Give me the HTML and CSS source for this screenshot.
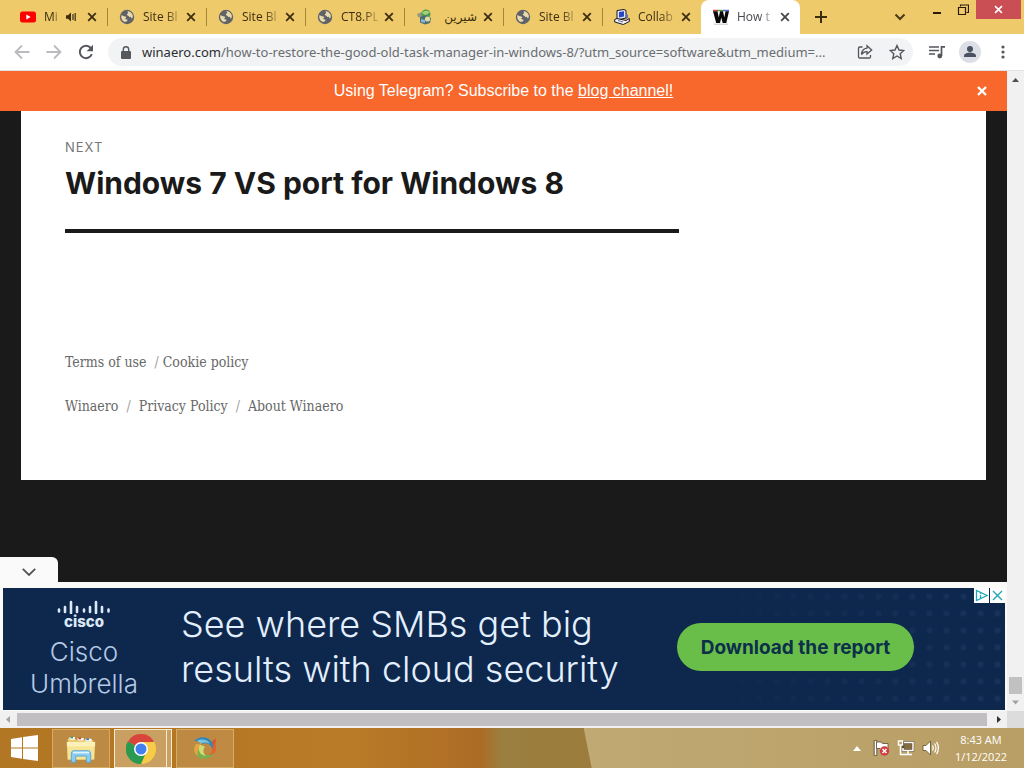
FILE: index.html
```html
<!DOCTYPE html>
<html lang="en">
<head>
<meta charset="utf-8">
<meta name="viewport" content="width=device-width, initial-scale=1.0">
<title>How to restore the good old Task Manager in Windows 8</title>
<link rel="stylesheet" href="styles.css">
</head>
<body>

<!-- shared icons -->
<svg class="sprite" aria-hidden="true">
  <symbol id="i-x" viewBox="0 0 10 10"><path d="M1.2 1.2l7.6 7.6M8.8 1.2L1.2 8.8" fill="none" stroke="currentColor" stroke-width="1.8"/></symbol>
  <symbol id="i-globe" viewBox="0 0 16 16"><circle cx="8" cy="8" r="7.2" fill="#5f6368"/><path d="M2.2 6.2c1.6.2 2.6 1.200 4 1.200 1.300 0 1.200 1.200.4 1.700-.7.5 0 1.600 1.200 1.500.9 0 1 .7.300 1.300-.7.700-2.100 1.100-3 .9-1.900-1.200-3.200-3.600-2.900-6.600zM8.600 2c2.200.2 4.200 1.700 5.100 4 .3 1.300.1 2.400-.4 3.300-.7.4-1-.4-1.300-1.100-.5-.8-1.700-.2-2.500-1.100-.6-.8-1.700-.6-1.600-1.600.1-.9 1.300-.8 1.300-1.700 0-.6-.8-.9-.6-1.800z" fill="#e9d9ad"/></symbol>
</svg>

<header class="tabs">
  <div class="tab">
    <svg class="fav" viewBox="0 0 16 16"><rect y="2.500" width="16" height="11" rx="2.500" fill="#f00"/><path d="M6.300 5.500v5l4.400-2.500z" fill="#fff"/></svg>
    <span class="tab-title">Mi</span>
    <svg class="sound" viewBox="0 0 12 12"><path d="M1 4.200h2L6 1.500v9L3 7.800H1z" fill="#3b2d10"/><path d="M8 3v6M10.200 2v8" stroke="#3b2d10" stroke-width="1.200"/></svg>
    <button class="tab-x" aria-label="Close tab"><svg><use href="#i-x"/></svg></button>
  </div>
  <div class="tab">
    <svg class="fav"><use href="#i-globe"/></svg>
    <span class="tab-title">Site Bl</span>
    <button class="tab-x" aria-label="Close tab"><svg><use href="#i-x"/></svg></button>
  </div>
  <div class="tab">
    <svg class="fav"><use href="#i-globe"/></svg>
    <span class="tab-title">Site Bl</span>
    <button class="tab-x" aria-label="Close tab"><svg><use href="#i-x"/></svg></button>
  </div>
  <div class="tab">
    <svg class="fav"><use href="#i-globe"/></svg>
    <span class="tab-title">CT8.PL</span>
    <button class="tab-x" aria-label="Close tab"><svg><use href="#i-x"/></svg></button>
  </div>
  <div class="tab">
    <svg class="fav" viewBox="0 0 16 16"><path d="M1 5l5-2 2 3-2 3-4-1z" fill="#8f9a83"/><circle cx="10" cy="5" r="4.500" fill="#4e9a45"/><path d="M6 4c2-3 6-3 8-.500-2 .500-3 2.500-5 2.500z" fill="#a2d27b"/><path d="M4 8l6-2 5 3-1 5-5 1.500-5-2z" fill="#4d6b73"/><circle cx="11.500" cy="10" r="2.600" fill="#d8dfa0"/><path d="M5 10l4 1v3l-4-1z" fill="#7fb7d8"/></svg>
    <span class="tab-title rtl" lang="fa" dir="rtl">شیرین</span>
    <button class="tab-x" aria-label="Close tab"><svg><use href="#i-x"/></svg></button>
  </div>
  <div class="tab">
    <svg class="fav"><use href="#i-globe"/></svg>
    <span class="tab-title">Site Bl</span>
    <button class="tab-x" aria-label="Close tab"><svg><use href="#i-x"/></svg></button>
  </div>
  <div class="tab">
    <svg class="fav" viewBox="0 0 16 16"><path d="M3 1.500L10 .5l2 1v7.500l-7 1.500-2-1z" fill="#e8eaf2" stroke="#15152c"/><path d="M5 3l5-.7v5.200L5 8.500z" fill="#2847c8"/><path d="M.7 10.500L3 9.500l9 2 3.300-2v3l-6 3-8.600-2.500z" fill="#f3f3f3" stroke="#15152c"/><path d="M4 11.500l5 1.500" stroke="#666b88"/><path d="M12 4l2 2v3l-2 1z" fill="#6572a8"/></svg>
    <span class="tab-title">Collab</span>
    <button class="tab-x" aria-label="Close tab"><svg><use href="#i-x"/></svg></button>
  </div>
  <div class="tab active">
    <svg class="fav" viewBox="0 0 16 16"><path d="M0 .8h5v1.500H0z" fill="#cf3c3c"/><path d="M5 .8h5v1.500H5z" fill="#47a540"/><path d="M10 .8h6v1.500h-6z" fill="#5360d0"/><path d="M0 2.300h4.500l1.300 6.200L7 2.300h3l1.300 6.200 1.200-6.200H16L13.300 14H9.700L8.300 8.500 7 14H3.200z" fill="#080808"/><path d="M1 15.200h14" stroke="#c5c5c5"/></svg>
    <span class="tab-title">How t</span>
    <button class="tab-x" aria-label="Close tab"><svg><use href="#i-x"/></svg></button>
  </div>
  <button class="new-tab" aria-label="New tab"><svg viewBox="0 0 12 12"><path d="M6 0v12M0 6h12" stroke="#3b2d10" stroke-width="2"/></svg></button>
  <button class="tab-search" aria-label="Search tabs"><svg viewBox="0 0 12 8"><path d="M1.500 1.500L6 6l4.500-4.500" fill="none" stroke="#4a3a17" stroke-width="2"/></svg></button>
  <div class="win-controls">
    <button aria-label="Minimize"><svg viewBox="0 0 12 12"><path d="M2 9h8" stroke="#2b1a0a" stroke-width="2"/></svg></button>
    <button aria-label="Restore"><svg viewBox="0 0 12 12"><path d="M3.500 2.500V1h8v7.500H9.500M1.500 3.500h7v7h-7z" fill="none" stroke="#2b1a0a" stroke-width="1.200"/></svg></button>
    <button class="win-close" aria-label="Close"><svg><use href="#i-x"/></svg></button>
  </div>
</header>

<nav class="toolbar">
  <button class="nav-btn off" aria-label="Back"><svg viewBox="0 0 16 16"><path d="M15.500 8H2M8 1.500L1.500 8 8 14.500" fill="none" stroke="currentColor" stroke-width="1.800"/></svg></button>
  <button class="nav-btn off" aria-label="Forward"><svg viewBox="0 0 16 16"><path d="M.5 8H14M8 1.500L14.500 8 8 14.500" fill="none" stroke="currentColor" stroke-width="1.800"/></svg></button>
  <button class="nav-btn" aria-label="Reload"><svg viewBox="0 0 16 16"><path d="M13.800 10.200A6.200 6.200 0 1 1 12.800 4" fill="none" stroke="currentColor" stroke-width="2"/><path d="M15 .8v6.400H8.600z" fill="currentColor"/></svg></button>
  <div class="address">
    <svg class="lock" viewBox="0 0 10 13"><rect y="5" width="10" height="8" rx="1" fill="#55585d"/><path d="M2.300 5.500V3.500a2.700 2.700 0 0 1 5.400 0v2" fill="none" stroke="#55585d" stroke-width="1.400"/></svg>
    <a class="url" href="#"><b>winaero.com</b>/how-to-restore-the-good-old-task-manager-in-windows-8/?utm_source=software&amp;utm_medium=...</a>
    <button class="ico" aria-label="Share"><svg viewBox="0 0 16 16" fill="none" stroke="currentColor" stroke-width="1.300"><path d="M5.500 3H2.800A1.300 1.300 0 0 0 1.500 4.300v8.400A1.300 1.300 0 0 0 2.800 14h9.400a1.300 1.300 0 0 0 1.300-1.300V11"/><path d="M10 1.800L14.700 6 10 10V7.600C7.400 7.500 5.700 8.600 4.500 10.600 4.700 7 6.600 4.500 10 4.200z"/></svg></button>
    <button class="ico" aria-label="Bookmark"><svg viewBox="0 0 16 16"><path d="M8 1.500l2 4.500 4.800.5-3.600 3.200 1 4.800L8 12l-4.200 2.500 1-4.800L1.200 6.500 6 6z" fill="none" stroke="currentColor" stroke-width="1.400"/></svg></button>
  </div>
  <div class="actions">
    <button class="ico" aria-label="Media"><svg viewBox="0 0 16 16"><path d="M0 3h10M0 6.500h10M0 10h6" stroke="currentColor" stroke-width="1.500"/><path d="M12.500 12V2.800H16" fill="none" stroke="currentColor" stroke-width="1.700"/><circle cx="10.800" cy="12" r="2.400" fill="currentColor"/></svg></button>
    <button class="profile" aria-label="Profile"><svg viewBox="0 0 22 22"><circle cx="11" cy="11" r="11" fill="#dcdfe6"/><circle cx="11" cy="8" r="3" fill="#4a5163"/><path d="M5 16v-1.500c0-2 4-3 6-3s6 1 6 3V16z" fill="#4a5163"/></svg></button>
    <button class="ico" aria-label="Menu"><svg viewBox="0 0 16 16" fill="currentColor"><circle cx="8" cy="3" r="1.600"/><circle cx="8" cy="8" r="1.600"/><circle cx="8" cy="13" r="1.600"/></svg></button>
  </div>
</nav>

<div class="viewport">
  <main class="page">
    <div class="notice">
      <p>Using Telegram? Subscribe to the <a href="#">blog channel!</a></p>
      <button aria-label="Dismiss"><svg viewBox="0 0 10 10"><path d="M1 1l8 8M9 1L1 9" stroke="#fff" stroke-width="2.400"/></svg></button>
    </div>

    <div class="site">
      <div class="next-post">
        <span class="meta">NEXT</span>
        <a href="#">Windows 7 VS port for Windows 8</a>
      </div>
      <footer class="site-footer">
        <p><a href="#">Terms of use</a>&nbsp; <i>/</i> <a href="#">Cookie policy</a></p>
        <p><a href="#">Winaero</a>&nbsp; <i>/</i>&nbsp; <a href="#">Privacy Policy</a>&nbsp; <i>/</i>&nbsp; <a href="#">About Winaero</a></p>
      </footer>
    </div>

    <aside class="anchor-ad">
      <button class="collapse" aria-label="Collapse ad"><svg viewBox="0 0 14 8"><path d="M.8.800L7 7 13.200.8" fill="none" stroke="#555" stroke-width="1.800"/></svg></button>
      <div class="ad">
        <div class="brand">
          <svg viewBox="0 0 54 14"><path d="M2 9.500v2M8 7v5M14 2v11M20 7v5M27 9.500v2M33 7v5M39 2v11M45 7v5M51.500 9.500v2" stroke="#dbe8f8" stroke-width="2.600" stroke-linecap="round"/></svg>
          <b>cisco</b>
          <span>Cisco<br>Umbrella</span>
        </div>
        <p class="slogan">See where SMBs get big<br>results with cloud security</p>
        <button class="cta">Download the report</button>
        <div class="ad-choices">
          <button aria-label="AdChoices"><svg viewBox="0 0 15 15"><path d="M2.500 2.500v10l10.500-5z" fill="none" stroke="#1fa7b4" stroke-width="1.300"/><path d="M6.500 5v1M6.500 7v3" stroke="#1fa7b4" stroke-width="1.300"/></svg></button>
          <button aria-label="Close ad"><svg viewBox="0 0 15 15"><path d="M3 3l9 9M12 3l-9 9" stroke="#1fa7b4" stroke-width="1.400"/></svg></button>
        </div>
      </div>
    </aside>
  </main>

  <div class="vscroll">
    <svg viewBox="0 0 17 17"><path d="M5 11l3.500-4 3.500 4z" fill="#505050"/></svg>
    <div class="vthumb"></div>
    <svg viewBox="0 0 17 17"><path d="M5 6.500l3.500 4 3.500-4z" fill="#a3a3a3"/></svg>
  </div>
  <div class="hscroll">
    <svg viewBox="0 0 17 17"><path d="M10 5L6 8.500 10 12z" fill="#a3a3a3"/></svg>
    <div class="hthumb"></div>
    <svg viewBox="0 0 17 17"><path d="M7 5l4 3.500L7 12z" fill="#303030"/></svg>
  </div>
  <div class="corner"></div>
</div>

<footer class="taskbar">
  <button class="start" aria-label="Start"><svg viewBox="0 0 27 26"><path d="M0 4l11-1.800v10.300H0zM12 2l15-2v12.500H12zM0 13.500h11v10.300L0 22zM12 13.500h15V26l-15-2z" fill="#fff"/></svg></button>
  <button class="task" aria-label="File Explorer"><svg viewBox="0 0 34 32">
    <path d="M2 4h8l2 2h19v22H2z" fill="#e9c96c"/><path d="M4 4h6M13 5h7M22 6h7" stroke="#fff" stroke-width="3"/><path d="M5 3h3" stroke="#3f9a5a" stroke-width="2"/><path d="M14 4h3" stroke="#c23e30" stroke-width="2"/><path d="M23 5h3" stroke="#2c78c4" stroke-width="2"/>
    <path d="M1 8h32l-1 20H2z" fill="#f7e596"/><path d="M1 8h32v5H1z" fill="#fbf0b8"/><path d="M6 31v-9c0-3 1-4 3-4h16c2 0 3 1 3 4v9h-5v-7H11v7z" fill="#8bcdf0" stroke="#4da2d8"/><path d="M8 20h18" stroke="#e0f6ff" stroke-width="2"/>
  </svg></button>
  <button class="task current" aria-label="Google Chrome"><svg viewBox="0 0 30 30">
    <path d="M15 15L2 7.500A15 15 0 0 1 28 7.500z" fill="#d9453a"/><path d="M15 15L28 7.500A15 15 0 0 1 15 30z" fill="#f7cb45"/><path d="M15 15v15A15 15 0 0 1 2 7.500z" fill="#2a9a50"/><path d="M15 8h13.300c3 7-1 19-13.300 22l6.500-11z" fill="#f7cb45"/><path d="M2 7.500L8.500 19l6.500 3 4-1L15 30A15 15 0 0 1 2 7.500z" fill="#2a9a50"/><circle cx="15" cy="15" r="7" fill="#fff"/><circle cx="15" cy="15" r="5.500" fill="#4180ee"/>
  </svg></button>
  <button class="task" aria-label="Swirl"><svg viewBox="0 0 30 30">
    <path d="M24 5c5 5 5 12 1 16-3 3-7 4-11 2 6 0 10-4 9-9 0-3-2-5-4-6l5 1z" fill="#e2642c"/>
    <path d="M27 2c1 4 0 6-1 9l-4-4c2-1 4-2 5-5z" fill="#d9532b"/>
    <path d="M4 9c-4 6-2 13 4 16 6 3 13 1 19-5-5 2-9 3-12 1-5-2-6-6-4-11z" fill="#7aae50"/>
    <path d="M5 9c-4 5-3 11 2 14-1-4-1-9 4-13z" fill="#f0a03c"/>
    <path d="M9 10c-3 6 0 12 7 13-3-3-4-7-1-11z" fill="#cfdc72"/>
    <path d="M2 6C7 1 15 0 20 4c4 3 5 7 4 11-2-5-7-8-12-6-2-3-6-4-10-3z" fill="#2f86bd"/>
    <path d="M6 5c6-2 12-1 15 4-4-2-8-2-11 0z" fill="#79c6dc"/>
  </svg></button>
  <div class="tray">
    <svg class="up" viewBox="0 0 8 5"><path d="M0 5l4-5 4 5z" fill="#fff"/></svg>
    <svg viewBox="0 0 18 18"><path d="M2.500 1.500v15" stroke="#4a3a24" stroke-width="3.500"/><path d="M2.500 2v14" stroke="#fff" stroke-width="1.800"/><path d="M3.500 3h5l1 1.500H15V11H8L7 9.500H3.500z" fill="#fff" stroke="#5d4a30" stroke-width=".8"/><circle cx="11.500" cy="12" r="4.700" fill="#cf3e43"/><path d="M9.500 10l4 4M13.500 10l-4 4" stroke="#fff" stroke-width="1.500"/></svg>
    <svg viewBox="0 0 18 18"><path d="M6 3.500h10v8H6z" fill="#806b43" stroke="#5d4a30" stroke-width="2.400"/><path d="M7 3.500h9v8H6V9M11 12v3M7 15.500h8" fill="none" stroke="#fff" stroke-width="1.500"/><path d="M1.500 2h4v4h-4zM3.500 6v9.500H7" fill="none" stroke="#fff" stroke-width="1.500"/></svg>
    <svg viewBox="0 0 18 18"><path d="M2 6.500h3L9.500 2v14L5 11.500H2z" fill="#fff" stroke="#5d4a30" stroke-width=".8"/><path d="M11.500 6.500c1 1.500 1 3.500 0 5M13.500 4.500c2 2.500 2 6.500 0 9M15.500 2.800c2.500 3.500 2.500 9 0 12.400" fill="none" stroke="#fff" stroke-width="1.200"/></svg>
    <time>8:43 AM<br>1/12/2022</time>
  </div>
</footer>

</body>
</html>
```

FILE: styles.css
```css
* { box-sizing: border-box; }
body {
  margin: 0;
  min-height: 100vh;
  display: flex;
  flex-direction: column;
  font-family: "Open Sans", "Noto Sans", sans-serif;
  font-size: 12px;
  background: #fff;
}
button { border: 0; padding: 0; margin: 0; background: none; color: inherit; font: inherit; cursor: pointer; }
svg { display: block; flex: none; }
p { margin: 0; }
.sprite { position: absolute; width: 0; height: 0; }

/* tab strip */
.tabs {
  display: flex;
  height: 34px;
  padding-left: 8px;
  background: #efca6b;
  color: #3b2d10;
}
.tab {
  display: flex;
  align-items: center;
  flex: 0 1 99px;
  min-width: 0;
  padding: 0 7px 0 12px;
}
.tab + .tab { background: linear-gradient(#a98536, #a98536) left center / 1px 18px no-repeat; }
.tabs .tab.active { background: #fff; border-radius: 8px 8px 0 0; color: #45484d; }
.fav { width: 16px; height: 16px; margin-right: 8px; }
.tab-title {
  flex: 1;
  min-width: 0;
  white-space: nowrap;
  line-height: 18px;
  -webkit-mask-image: linear-gradient(to right, #000 60%, #0003);
  mask-image: linear-gradient(to right, #000 60%, #0003);
}
.tab-title.rtl { font-family: "Open Sans", "DejaVu Sans", sans-serif; -webkit-mask-image: none; mask-image: none; }
.sound { width: 12px; height: 12px; margin: 0 4px 0 6px; }
.tab-x { padding: 3px; margin-left: 3px; }
.tab-x svg { width: 10px; height: 10px; }
.new-tab { width: 42px; display: grid; place-items: center; }
.new-tab svg { width: 12px; height: 12px; }
.tab-search { margin-left: auto; width: 32px; display: grid; place-items: center; }
.tab-search svg { width: 12px; height: 8px; }
.win-controls { display: flex; align-items: flex-start; margin-left: 8px; }
.win-controls button { width: 26px; height: 19px; display: grid; place-items: center; }
.win-controls svg { width: 12px; height: 12px; }
.win-controls .win-close { width: 45px; margin-right: 3px; background: #c94f54; color: #fff; }
.win-close svg { width: 9px; height: 9px; }

/* toolbar */
.toolbar {
  display: flex;
  align-items: center;
  height: 37px;
  padding: 0 13px 0 14px;
  border-bottom: 1px solid #e3e3e3;
  background: #fff;
  color: #54575c;
}
.nav-btn { width: 16px; margin-right: 16px; }
.nav-btn svg { width: 16px; height: 16px; }
.nav-btn.off { color: #b9bbbe; }
.address {
  flex: 1;
  min-width: 0;
  display: flex;
  align-items: center;
  gap: 16px;
  height: 28px;
  margin-left: -2px;
  padding: 0 8px 0 13px;
  border-radius: 14px;
  background: #f1f3f4;
}
.lock { width: 10px; height: 13px; }
.url {
  flex: 1;
  min-width: 0;
  margin-left: -5px;
  white-space: nowrap;
  font-family: "Noto Sans", "Open Sans", sans-serif;
  font-size: 13px;
  line-height: 20px;
  color: #6a6d72;
  text-decoration: none;
}
.url b { font-weight: 400; color: #2c2e31; }
.ico svg { width: 16px; height: 16px; }
.actions { display: flex; align-items: center; gap: 14px; margin-left: 16px; }
.profile svg { width: 22px; height: 22px; }

/* page viewport */
.viewport {
  flex: 1;
  display: grid;
  grid-template: 1fr 17px / 1fr 17px;
}
.page {
  display: flex;
  flex-direction: column;
  min-width: 0;
  background: #1a1a1a;
}
.notice {
  display: flex;
  align-items: center;
  height: 40px;
  padding: 0 20px 0 30px;
  background: #f8672b;
  color: #fff;
  font: 16px/24px "Liberation Sans", Arial, sans-serif;
}
.notice p { flex: 1; text-align: center; }
.notice a { color: #fff; }
.notice svg { width: 10px; height: 10px; }
.site {
  margin: 0 21px auto;
  padding: 24px 44px 62px;
  background: #fff;
}
.next-post {
  max-width: 614px;
  padding-bottom: 26px;
  border-bottom: 4px solid #1a1a1a;
  font-family: Inter, sans-serif;
}
.meta { display: block; font-size: 13px; line-height: 24px; letter-spacing: 1px; color: #777; }
.next-post a {
  display: block;
  padding-top: 4px;
  font-size: 30px;
  line-height: 40px;
  font-weight: 700;
  color: #1a1a1a;
  text-decoration: none;
}
.site-footer {
  padding-top: 117px;
  font: 14px/24px "DejaVu Serif Condensed", "DejaVu Serif", serif;
  font-stretch: condensed;
  color: #686868;
}
.site-footer p + p { margin-top: 20px; }
.site-footer a { color: #686868; text-decoration: none; }
.site-footer i { font-style: normal; color: #a0a0a0; }

/* anchored ad */
.anchor-ad { position: relative; padding: 6px 2px 1px 3px; background: #fafaf8; }
.collapse {
  position: absolute;
  left: 0;
  bottom: 100%;
  display: grid;
  place-items: center;
  width: 58px;
  height: 25px;
  padding-top: 4px;
  border-radius: 0 6px 0 0;
  background: #fafafa;
}
.collapse svg { width: 14px; height: 8px; }
.ad {
  position: relative;
  display: flex;
  align-items: center;
  height: 122px;
  padding-bottom: 4px;
  font-family: Inter, sans-serif;
  background:
    linear-gradient(to right, #0d274d 70%, transparent),
    radial-gradient(circle, #18335a 2px, transparent 4px) 0 0 / 17px 17px,
    #0d274d;
}
.brand {
  width: 162px;
  display: flex;
  flex-direction: column;
  align-items: center;
  padding-top: 6px;
  text-align: center;
  color: #b4c9e5;
  font-size: 26px;
  line-height: 32px;
  font-weight: 300;
}
.brand svg { width: 54px; height: 14px; }
.brand b { margin-bottom: 6px; font-size: 15px; line-height: 16px; font-weight: 800; color: #dbe8f8; }
.slogan { margin-left: 16px; font-size: 36px; line-height: 45px; font-weight: 300; color: #e3effc; white-space: nowrap; }
.cta {
  width: 237px;
  height: 48px;
  margin: 0 91px 0 auto;
  border-radius: 24px;
  background: #69be49;
  color: #0c2f4a;
  font-size: 19px;
  font-weight: 700;
}
.ad-choices { position: absolute; top: 0; right: 0; display: flex; gap: 1px; }
.ad-choices button { background: #fff; }
.ad-choices svg { width: 15px; height: 15px; }

/* scrollbars */
.vscroll { display: flex; flex-direction: column; background: #f1f1f1; }
.vscroll svg, .hscroll svg { width: 17px; height: 17px; }
.vthumb { height: 17px; margin: auto 2px 0; background: #c1c1c1; }
.hscroll { display: flex; background: #f1f1f1; }
.hthumb { flex: 1; margin: 2px 3px 2px 0; background: #c1bfc1; }
.corner { background: #dcdcdc; }

/* taskbar */
.taskbar {
  position: relative;
  z-index: 0;
  display: flex;
  height: 40px;
  background: linear-gradient(to right, #b27724, #b57722 20%, #b97b28 34%, #ad6c25 47%, #9a7f40 49%, #9d7c3b 60%);
}
.taskbar::before {
  content: "";
  position: absolute;
  z-index: -1;
  inset: 0 0 0 57%;
  background: linear-gradient(to right, #c0a974, #b89e64);
  clip-path: polygon(0 0, 100% 0, 100% 100%, 8px 100%);
}
.start { width: 48px; display: grid; place-items: center; }
.start svg { width: 27px; height: 26px; }
.task {
  width: 58px;
  height: 39px;
  margin: 1px 0 0 4px;
  display: grid;
  place-items: center;
  border: 1px solid #d3ad68;
  background: #c79d6380;
}
.task svg { width: 30px; height: 30px; }
.task:not(.current):nth-child(4) svg { width: 26px; height: 26px; }
.task.current {
  padding-right: 4px;
  border: 1px solid #f5ead2;
  background: linear-gradient(#f5ead2, #f5ead2) right 4px top / 1px 100% no-repeat, #c99f62;
}
.tray { display: flex; align-items: center; gap: 6px; margin-left: auto; padding-right: 17px; color: #fff; }
.tray svg { width: 18px; height: 18px; }
.tray .up { width: 8px; height: 5px; margin-right: 6px; }
.tray time { margin-left: 10px; text-align: center; font-size: 11px; line-height: 17px; }
```
